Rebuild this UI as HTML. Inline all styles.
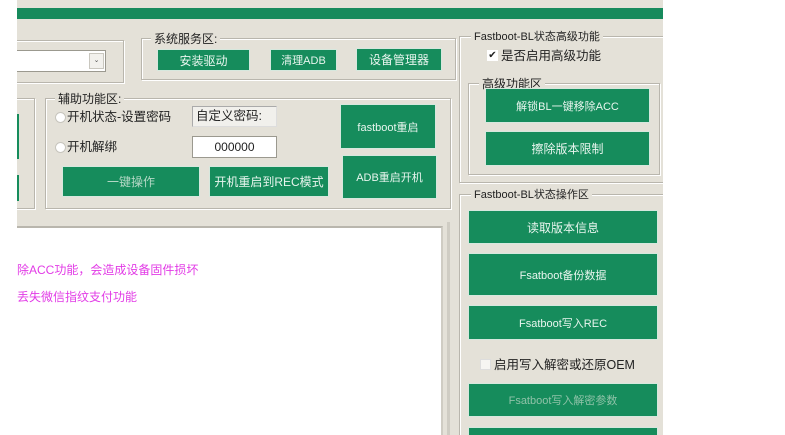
<!DOCTYPE html>
<html><head><meta charset="utf-8"><style>
*{margin:0;padding:0;box-sizing:border-box}
html,body{width:785px;height:435px;overflow:hidden}
body{background:#fff;position:relative;font-family:"Liberation Sans","Noto Sans CJK SC",sans-serif;font-size:12px;color:#222}
.a{position:absolute}
.app{left:17px;top:0;width:646px;height:435px;background:#e4e1d8}
.bar{left:17px;top:8px;width:646px;height:11px;background:#178a5c}
.g{position:absolute;border:1px solid #b9b6ad;box-shadow:1px 1px 0 #fff inset,1px 1px 0 #fff}
.lg{position:absolute;background:#e4e1d8;padding:0 3px;font-size:12px;line-height:12px;color:#222}
.b{position:absolute;background:#168c5c;color:#e8f5ee;display:flex;align-items:center;justify-content:center;font-size:12px;border:1px solid #d6e8de}
.w{position:absolute;background:#fff;border:1px solid #9b998f}
.r{position:absolute;width:11px;height:11px;border-radius:50%;background:#fff;border:1px solid #c7c5bd}
.t{position:absolute;font-size:12.5px;line-height:14px}
</style></head><body>
<div class="a app"></div>
<div class="a bar"></div>

<div class="g" style="left:10px;top:40px;width:114px;height:43px"></div>
<div class="w" style="left:17px;top:50px;width:89px;height:22px;border-left:none"></div>
<div class="a" style="left:89px;top:53px;width:15px;height:16px;border:1px solid #c9c7bf;background:#f2f1ed;font-size:7px;text-align:center;line-height:14px;color:#555">⌄</div>
<div class="g" style="left:10px;top:98px;width:25px;height:111px"></div>
<div class="a" style="left:17px;top:114px;width:2px;height:45px;background:#168c5c"></div>
<div class="a" style="left:17px;top:175px;width:2px;height:26px;background:#168c5c"></div>

<div class="g" style="left:141px;top:38px;width:315px;height:42px"></div>
<div class="lg" style="left:151px;top:33px">系统服务区:</div>
<div class="b" style="left:157px;top:49px;width:93px;height:22px">安装驱动</div>
<div class="b" style="left:270px;top:49px;width:67px;height:22px;font-size:11px">清理ADB</div>
<div class="b" style="left:356px;top:48px;width:86px;height:23px">设备管理器</div>

<div class="g" style="left:45px;top:98px;width:406px;height:111px"></div>
<div class="lg" style="left:55px;top:93px">辅助功能区:</div>
<div class="r" style="left:55px;top:112px"></div>
<div class="t" style="left:67px;top:110px">开机状态-设置密码</div>
<div class="r" style="left:55px;top:142px"></div>
<div class="t" style="left:67px;top:140px">开机解绑</div>
<div class="a" style="left:192px;top:106px;width:85px;height:21px;background:#f1f0ec;border:1px solid #aaa;border-right-color:#ddd;border-bottom-color:#ddd;font-size:12.5px;line-height:19px;padding-left:3px">自定义密码:</div>
<div class="w" style="left:192px;top:136px;width:85px;height:22px;text-align:center;line-height:20px;font-size:12px">000000</div>
<div class="b" style="left:62px;top:166px;width:138px;height:31px;color:#b5d8c6">一键操作</div>
<div class="b" style="left:209px;top:166px;width:120px;height:31px">开机重启到REC模式</div>
<div class="b" style="left:340px;top:104px;width:96px;height:45px;font-size:11px">fastboot重启</div>
<div class="b" style="left:342px;top:155px;width:95px;height:44px;font-size:11px">ADB重启开机</div>

<div class="a" style="left:17px;top:226px;width:426px;height:209px;background:#fff;border-top:2px solid #b9b6ad;border-right:2px solid #cfccc3"></div>
<div class="a" style="left:17px;top:261px;color:#e23be6;font-size:12px">除ACC功能，会造成设备固件损坏</div>
<div class="a" style="left:17px;top:288px;color:#e23be6;font-size:12px">丢失微信指纹支付功能</div>
<div class="a" style="left:447px;top:222px;width:3px;height:213px;background:#cfccc3"></div>

<div class="g" style="left:459px;top:36px;width:210px;height:147px"></div>
<div class="lg" style="left:471px;top:31px;font-size:11px">Fastboot-BL状态高级功能</div>
<div class="a" style="left:487px;top:50px;width:11px;height:11px;background:#fff;font-size:10px;line-height:11px;text-align:center">✔</div>
<div class="t" style="left:501px;top:49px">是否启用高级功能</div>
<div class="g" style="left:468px;top:83px;width:192px;height:92px"></div>
<div class="lg" style="left:479px;top:78px">高级功能区</div>
<div class="b" style="left:485px;top:88px;width:165px;height:35px;font-size:11px">解锁BL一键移除ACC</div>
<div class="b" style="left:485px;top:131px;width:165px;height:35px">擦除版本限制</div>

<div class="g" style="left:459px;top:194px;width:210px;height:241px;border-bottom:none"></div>
<div class="lg" style="left:471px;top:189px;font-size:11px">Fastboot-BL状态操作区</div>
<div class="b" style="left:468px;top:210px;width:190px;height:34px">读取版本信息</div>
<div class="b" style="left:468px;top:253px;width:190px;height:43px;font-size:11px">Fsatboot备份数据</div>
<div class="b" style="left:468px;top:305px;width:190px;height:35px;font-size:11px">Fsatboot写入REC</div>
<div class="a" style="left:480px;top:359px;width:11px;height:11px;background:#f6f5f2;border:1px solid #ddd"></div>
<div class="t" style="left:494px;top:358px">启用写入解密或还原OEM</div>
<div class="b" style="left:468px;top:383px;width:190px;height:34px;font-size:11px;color:#8fc2a8">Fsatboot写入解密参数</div>
<div class="b" style="left:468px;top:427px;width:190px;height:8px;border-bottom:none"></div>

<div class="a" style="left:0;top:0;width:17px;height:435px;background:#fff"></div>
<div class="a" style="left:663px;top:0;width:122px;height:435px;background:#fff"></div>
</body></html>
